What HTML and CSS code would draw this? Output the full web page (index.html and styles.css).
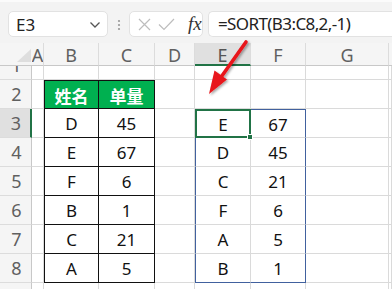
FILE: index.html
```html
<!DOCTYPE html>
<html>
<head>
<meta charset="utf-8">
<link rel="stylesheet" href="styles.css">
</head>
<body>
<div class="app">
  <div class="toolbar">
    <div class="namebox">
      <span class="nb-text">E3</span>
      <svg class="chev" width="12" height="8" viewBox="0 0 12 8"><path d="M1.5 1.5 L6 6 L10.5 1.5" fill="none" stroke="#555" stroke-width="1.3"/></svg>
    </div>
    <svg class="dots" width="4" height="12" viewBox="0 0 4 12"><circle cx="2" cy="2" r="1.1" fill="#999"/><circle cx="2" cy="6" r="1.1" fill="#999"/><circle cx="2" cy="10" r="1.1" fill="#999"/></svg>
    <div class="fxbox">
      <svg class="ic" width="13" height="13" viewBox="0 0 13 13"><path d="M1 1 L12 12 M12 1 L1 12" stroke="#bdbdbd" stroke-width="1.2" fill="none"/></svg>
      <svg class="ic" width="17" height="13" viewBox="0 0 17 13"><path d="M1 6.5 L6 11.5 L16 1" stroke="#bdbdbd" stroke-width="1.2" fill="none"/></svg>
      <span class="fx">fx</span>
    </div>
    <div class="formula">=SORT(B3:C8,2,-1)</div>
  </div>

  <div class="sheet">
    <!-- header row -->
    <div class="ch corner"><span class="tri"></span></div>
    <div class="ch">A</div>
    <div class="ch">B</div>
    <div class="ch">C</div>
    <div class="ch">D</div>
    <div class="ch sel">E</div>
    <div class="ch">F</div>
    <div class="ch">G</div>
    <div class="ch last"></div>

    <!-- row 1 -->
    <div class="rh r1"><span class="r1num">1</span></div>
    <div class="c"></div><div class="c"></div><div class="c"></div><div class="c"></div><div class="c"></div><div class="c"></div><div class="c"></div><div class="c"></div>

    <!-- row 2 -->
    <div class="rh">2</div>
    <div class="c"></div>
    <div class="c g tl top">姓名</div>
    <div class="c g tr top">单量</div>
    <div class="c"></div><div class="c"></div><div class="c"></div><div class="c"></div><div class="c"></div>

    <!-- row 3 -->
    <div class="rh sel">3</div>
    <div class="c"></div>
    <div class="c t tl">D</div>
    <div class="c t tr">45</div>
    <div class="c"></div>
    <div class="c bl bt active">E<span class="selbox"><span class="handle"></span></span></div>
    <div class="c br bt">67</div>
    <div class="c"></div><div class="c"></div>

    <!-- row 4 -->
    <div class="rh">4</div>
    <div class="c"></div>
    <div class="c t tl">E</div>
    <div class="c t tr">67</div>
    <div class="c"></div>
    <div class="c bl">D</div>
    <div class="c br">45</div>
    <div class="c"></div><div class="c"></div>

    <!-- row 5 -->
    <div class="rh">5</div>
    <div class="c"></div>
    <div class="c t tl">F</div>
    <div class="c t tr">6</div>
    <div class="c"></div>
    <div class="c bl">C</div>
    <div class="c br">21</div>
    <div class="c"></div><div class="c"></div>

    <!-- row 6 -->
    <div class="rh">6</div>
    <div class="c"></div>
    <div class="c t tl">B</div>
    <div class="c t tr">1</div>
    <div class="c"></div>
    <div class="c bl">F</div>
    <div class="c br">6</div>
    <div class="c"></div><div class="c"></div>

    <!-- row 7 -->
    <div class="rh">7</div>
    <div class="c"></div>
    <div class="c t tl">C</div>
    <div class="c t tr">21</div>
    <div class="c"></div>
    <div class="c bl">A</div>
    <div class="c br">5</div>
    <div class="c"></div><div class="c"></div>

    <!-- row 8 -->
    <div class="rh">8</div>
    <div class="c"></div>
    <div class="c t tl">A</div>
    <div class="c t tr">5</div>
    <div class="c"></div>
    <div class="c bl bb">B</div>
    <div class="c br bb">1</div>
    <div class="c"></div><div class="c"></div>

    <!-- row 9 -->
    <div class="rh"></div>
    <div class="c"></div><div class="c"></div><div class="c"></div><div class="c"></div><div class="c"></div><div class="c"></div><div class="c"></div><div class="c"></div>
  </div>

  <svg class="arrow" width="392" height="289" viewBox="0 0 392 289">
    <defs>
      <filter id="sh" x="-50%" y="-50%" width="200%" height="200%">
        <feDropShadow dx="1.5" dy="1.5" stdDeviation="1.2" flood-color="#000" flood-opacity="0.35"/>
      </filter>
    </defs>
    <g filter="url(#sh)">
      <line x1="246" y1="42" x2="219" y2="80" stroke="#e8141a" stroke-width="3.6" stroke-linecap="round"/>
      <polygon points="209,94 214.5,70.5 227,79.5" fill="#e8141a"/>
    </g>
  </svg>
</div>
</body>
</html>
```

FILE: styles.css
```css
* { box-sizing: border-box; }
html, body { margin: 0; padding: 0; background: #fff; }
body {
  width: 392px;
  height: 289px;
  overflow: hidden;
  font-family: "Noto Sans", "Noto Sans CJK SC", sans-serif;
}
.app { position: relative; width: 392px; height: 289px; overflow: hidden; }

.toolbar {
  height: 43px;
  background: #f3f3f3;
  border-top: 2px solid #fbfbfb;
  display: flex;
  align-items: flex-start;
  padding: 9px 0 0 8px;
}
.namebox {
  width: 100px;
  height: 26px;
  background: #fff;
  border: 1px solid #e2e2e2;
  border-radius: 5px;
  display: flex;
  align-items: center;
  justify-content: space-between;
  padding: 0 6px 0 7px;
}
.nb-text { font-size: 17px; color: #222; line-height: 1; }
.chev { margin-top: 1px; }
.dots { margin: 8px 8px 0 9px; }
.fxbox {
  width: 74px;
  height: 26px;
  background: #fff;
  border: 1px solid #e2e2e2;
  border-radius: 5px;
  display: flex;
  align-items: center;
  padding-left: 8px;
  gap: 7px;
}
.fxbox .ic { flex: none; }
.fx {
  font-family: "Liberation Serif", serif;
  font-style: italic;
  font-size: 19px;
  color: #333;
  margin-left: 6px;
  line-height: 1;
  margin-top: -2px;
}
.formula {
  margin-left: 5px;
  flex: 1;
  height: 26px;
  background: #fff;
  border: 1px solid #e2e2e2;
  border-right: none;
  border-radius: 5px 0 0 5px;
  padding-left: 9px;
  font-size: 17px;
  line-height: 24px;
  color: #222;
  letter-spacing: -0.6px;
}

.sheet {
  display: grid;
  grid-template-columns: 32px 12px 55px 56px 40px 56px 55px 83px 3px;
  grid-template-rows: 23px 14px repeat(7, 29px) 20px;
}
.ch {
  background: #f5f5f5;
  border-right: 1px solid #dcdcdc;
  border-bottom: 1px solid #c8c8c8;
  font-size: 18px;
  color: #606060;
  display: flex;
  align-items: center;
  justify-content: center;
  line-height: 1;
  padding-top: 2px;
  overflow: hidden;
}
.ch.corner { position: relative; border-right: none; }
.tri {
  position: absolute;
  right: 1px;
  bottom: 3px;
  width: 0; height: 0;
  border-left: 14px solid transparent;
  border-bottom: 13px solid #dedede;
}
.ch.sel { background: #e0e0e0; border-bottom: 2px solid #217346; color: #555; }
.ch.last { border-right: none; }

.rh {
  background: #f5f5f5;
  border-right: 1px solid #c8c8c8;
  border-bottom: 1px solid #dcdcdc;
  font-size: 18px;
  color: #606060;
  display: flex;
  align-items: center;
  justify-content: center;
  padding-left: 2px;
  line-height: 1;
}
.rh.r1 { align-items: flex-start; overflow: hidden; }
.r1num { display: block; font-size: 18px; line-height: 18px; margin-top: -10px; }
.rh.sel { background: #e0e0e0; border-right: 2px solid #217346; }

.c {
  border-right: 1px solid #dadada;
  border-bottom: 1px solid #dadada;
  font-size: 17px;
  color: #111;
  display: flex;
  align-items: center;
  justify-content: center;
  line-height: 1;
  padding-top: 1px;
}
.c.g {
  background: #00b050;
  color: #fff;
  font-weight: 700;
  font-size: 17px;
  font-family: "Noto Sans CJK SC", sans-serif;
}
.c.t, .c.g { border-right: 1px solid #111; border-bottom: 1px solid #111; }
.c.tl { border-left: 1px solid #111; }
.c.top { border-top: 1px solid #111; }

.c.bl { border-left: 1px solid #41619e; }
.c.br { border-right: 1px solid #41619e; }
.c.bt { border-top: 1px solid #41619e; }
.c.bb { border-bottom: 1px solid #41619e; }

.c.active { position: relative; }
.selbox {
  position: absolute;
  left: -1px; top: -1px; right: -1px; bottom: -1px;
  border: 2px solid #217346;
}
.handle {
  position: absolute;
  right: -4px;
  bottom: -4px;
  width: 6px;
  height: 6px;
  background: #217346;
  border: 1px solid #fff;
}

.arrow { position: absolute; left: 0; top: 0; pointer-events: none; }
```
